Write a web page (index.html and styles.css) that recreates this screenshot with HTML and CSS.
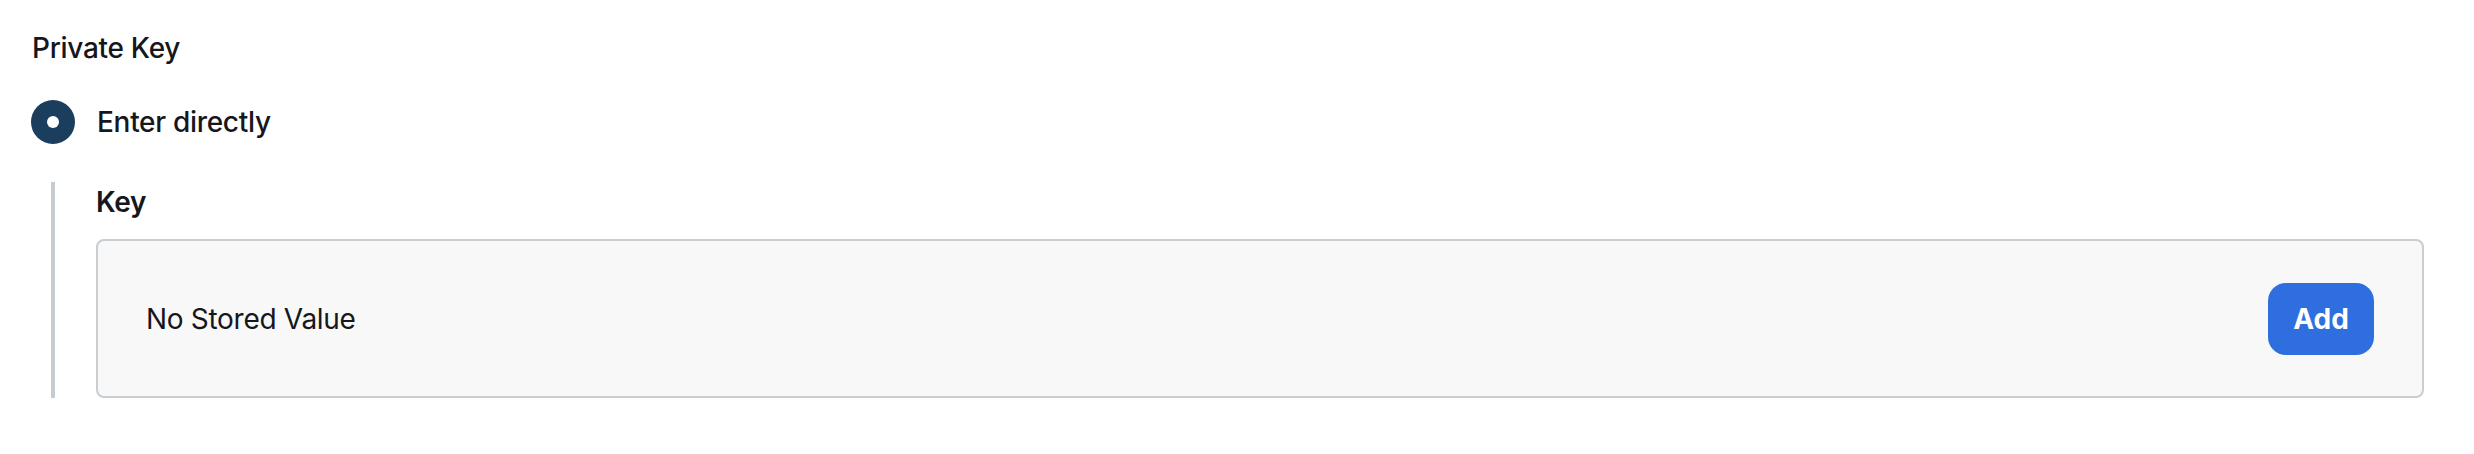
FILE: index.html
```html
<!DOCTYPE html>
<html lang="en">
<head>
<meta charset="UTF-8" />
<meta name="viewport" content="width=device-width, initial-scale=1.0" />
<title>Private Key</title>
<link rel="stylesheet" href="styles.css">
</head>
<body>
  <main class="field">
    <div class="field-label">Private Key</div>
    <label class="radio-row">
      <span class="radio-dot"></span>
      <span class="radio-text">Enter directly</span>
    </label>
    <section class="nested">
      <div class="key-label">Key</div>
      <div class="stored-box">
        <span class="stored-text">No Stored Value</span>
        <button type="button" class="add-btn">Add</button>
      </div>
    </section>
  </main>
</body>
</html>
```

FILE: styles.css
```css
html {
  margin: 0;
  padding: 0;
  box-sizing: border-box;
}

*, *::before, *::after {
  box-sizing: inherit;
}

body {
  margin: 0;
  font-family: Inter, "Noto Sans", "Liberation Sans", sans-serif;
  font-size: 28px;
  line-height: 40px;
  letter-spacing: -0.3px;
  color: #16161d;
  background-color: #ffffff;
}

.field {
  padding: 28px 50px 0 32px;
}

.field-label {
  font-weight: 500;
}

.radio-row {
  display: flex;
  align-items: center;
  gap: 22px;
  margin-top: 32px;
  height: 44px;
  margin-left: -1px;
}

.radio-dot {
  width: 44px;
  height: 44px;
  border-radius: 50%;
  background-color: #1b3e5f;
  display: flex;
  align-items: center;
  justify-content: center;
}

.radio-dot::after {
  content: "";
  width: 12px;
  height: 12px;
  border-radius: 50%;
  background-color: #ffffff;
}

.radio-text {
  font-weight: 500;
}

.nested {
  margin-top: 38px;
  margin-left: 19px;
  padding-left: 41px;
  border-left: 4px solid #c5ccd1;
}

.key-label {
  font-weight: 600;
  margin-bottom: 17px;
}

.stored-box {
  display: flex;
  align-items: center;
  justify-content: space-between;
  height: 159px;
  padding: 0 48px;
  background-color: #f8f8f8;
  border: 2px solid #c9ced2;
  border-radius: 8px;
}

.add-btn {
  font-family: inherit;
  font-size: 28px;
  font-weight: 700;
  letter-spacing: 0;
  color: #ffffff;
  background-color: #2f6ede;
  border: none;
  border-radius: 18px;
  height: 72px;
  width: 106px;
  padding: 0;
  cursor: pointer;
}
```
